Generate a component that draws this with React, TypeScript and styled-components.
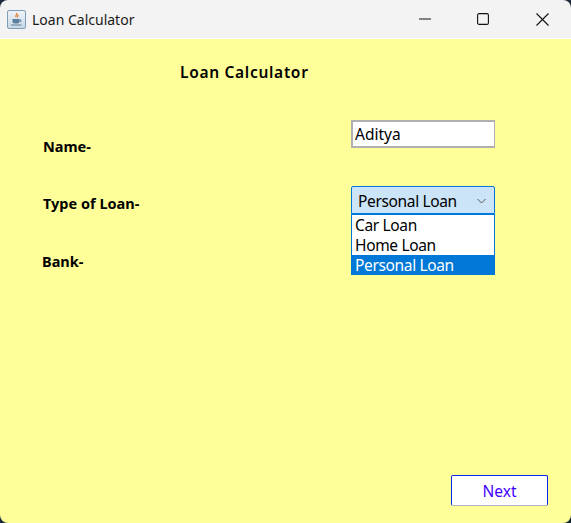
import React from "react";
import styled, { createGlobalStyle } from "styled-components";

const Global = createGlobalStyle`
  html, body { margin: 0; padding: 0; background: #1a2a3a; }
  #root { width: 571px; height: 523px; overflow: hidden; }
`;

const Window = styled.div`
  width: 571px;
  height: 523px;
  display: flex;
  flex-direction: column;
  border-radius: 8px;
  overflow: hidden;
  font-family: "Noto Sans", "Open Sans", sans-serif;
  color: #000;
`;

const TitleBar = styled.div`
  height: 38px;
  flex: none;
  display: flex;
  align-items: center;
  background: #f3f3f3;
  border-bottom: 1px solid #fff;
  padding-left: 7px;
`;

const AppIcon = styled.div`
  width: 19px;
  height: 19px;
  flex: none;
  box-sizing: border-box;
  border: 1px solid #7f9db9;
  border-radius: 2px;
  background: linear-gradient(#eef3f8, #c9d8e6);
  display: flex;
  align-items: center;
  justify-content: center;
`;

const WindowTitle = styled.span`
  margin-left: 6px;
  font-size: 14px;
  color: #1a1a1a;
  flex: 1;
`;

const WinButton = styled.button<{ $gap?: number }>`
  width: 58px;
  height: 38px;
  border: 0;
  padding: 0;
  margin-left: ${(p) => p.$gap ?? 0}px;
  background: transparent;
  display: flex;
  align-items: center;
  justify-content: center;
`;

const Body = styled.main`
  flex: 1;
  background: #ffff99;
  display: flex;
  flex-direction: column;
`;

const Heading = styled.h1`
  margin: 23px 0 0 180px;
  font-size: 15.5px;
  line-height: 20px;
  font-weight: 600;
  letter-spacing: 0.7px;
`;

const Row = styled.div<{ $top: number; $left?: number }>`
  margin-top: ${(p) => p.$top}px;
  padding-left: ${(p) => p.$left ?? 43}px;
  width: 495px;
  box-sizing: border-box;
  display: flex;
  justify-content: space-between;
  align-items: flex-start;
`;

const Label = styled.label<{ $drop?: number }>`
  font-size: 14.5px;
  line-height: 20px;
  font-weight: 700;
  margin-top: ${(p) => p.$drop ?? 0}px;
`;

const NameInput = styled.div`
  width: 144px;
  height: 28px;
  box-sizing: border-box;
  border: 2px solid #b0b0b4;
  border-right-width: 1px;
  background: #fff;
  font-size: 15.5px;
  line-height: 24px;
  padding-left: 2px;
`;

const ComboWrap = styled.div`
  position: relative;
  width: 144px;
  height: 28px;
`;

const Combo = styled.div`
  height: 28px;
  box-sizing: border-box;
  border: 1px solid #0078d7;
  background: #cce4f7;
  border-radius: 2px 2px 0 0;
  font-size: 15.5px;
  letter-spacing: -0.35px;
  line-height: 26px;
  padding: 1px 8px 0 6px;
  display: flex;
  align-items: center;
  justify-content: space-between;
`;

const Popup = styled.ul`
  position: absolute;
  left: 0;
  top: 28px;
  width: 144px;
  height: 61px;
  box-sizing: border-box;
  margin: 0;
  padding: 0;
  list-style: none;
  background: #fff;
  border: 1px solid #0078d7;
  border-bottom: 0;
  overflow: hidden;
`;

const Option = styled.li<{ $selected?: boolean }>`
  height: 20px;
  padding: 1px 0 0 3px;
  box-sizing: border-box;
  font-size: 15.5px;
  letter-spacing: -0.35px;
  line-height: 19px;
  background: ${(p) => (p.$selected ? "#0078d7" : "transparent")};
  color: ${(p) => (p.$selected ? "#fff" : "#000")};
`;

const Footer = styled.div`
  margin-top: auto;
  padding: 0 23px 17px 0;
  display: flex;
  justify-content: flex-end;
`;

const NextButton = styled.button`
  width: 97px;
  height: 31px;
  box-sizing: border-box;
  padding: 0;
  border: 1px solid #0a24f0;
  border-bottom: 1px solid #b4b4c0;
  border-radius: 2px;
  background: #fff;
  color: #4400ff;
  font-family: inherit;
  font-size: 15.5px;
`;

export default function App() {
  return (
    <Window>
      <Global />
      <TitleBar>
        <AppIcon>
          <svg width="13" height="15" viewBox="0 0 13 15" fill="none">
            <path d="M6.5 1c1 1.5-1.5 2.5-.5 4M8 2.5c.5 1-1 1.7-.5 3" stroke="#e07a25" strokeWidth="1.2" />
            <path d="M2.5 7h7v2.5a2 2 0 0 1-2 2h-3a2 2 0 0 1-2-2z" fill="#5b7f9e" />
            <path d="M9.5 8h1.4v1.4H9.5" stroke="#5b7f9e" />
            <path d="M1 13h10.5" stroke="#5b7f9e" strokeWidth="1.2" />
          </svg>
        </AppIcon>
        <WindowTitle>Loan Calculator</WindowTitle>
        <WinButton aria-label="Minimize">
          <svg width="12" height="12" viewBox="0 0 12 12">
            <path d="M0 6h12" stroke="#111" strokeWidth="1" />
          </svg>
        </WinButton>
        <WinButton aria-label="Maximize">
          <svg width="12" height="12" viewBox="0 0 12 12" fill="none">
            <rect x="0.6" y="0.6" width="10.8" height="10.8" rx="1.5" stroke="#111" strokeWidth="1.1" />
          </svg>
        </WinButton>
        <WinButton aria-label="Close" $gap={1}>
          <svg width="13" height="13" viewBox="0 0 13 13">
            <path d="M.5.5l12 12M12.5.5l-12 12" stroke="#111" strokeWidth="1.1" />
          </svg>
        </WinButton>
      </TitleBar>
      <Body>
        <Heading>Loan Calculator</Heading>
        <Row $top={38}>
          <Label $drop={16}>Name-</Label>
          <NameInput>Aditya</NameInput>
        </Row>
        <Row $top={30}>
          <Label $drop={7}>Type of Loan-</Label>
          <ComboWrap>
            <Combo>
              Personal Loan
              <svg width="9" height="6" viewBox="0 0 9 6" fill="none">
                <path d="M.5 1l4 4 4-4" stroke="#555" strokeWidth="1" />
              </svg>
            </Combo>
            <Popup>
              <Option>Car Loan</Option>
              <Option>Home Loan</Option>
              <Option $selected>Personal Loan</Option>
            </Popup>
          </ComboWrap>
        </Row>
        <Row $top={37} $left={42}>
          <Label>Bank-</Label>
        </Row>
        <Footer>
          <NextButton>Next</NextButton>
        </Footer>
      </Body>
    </Window>
  );
}
